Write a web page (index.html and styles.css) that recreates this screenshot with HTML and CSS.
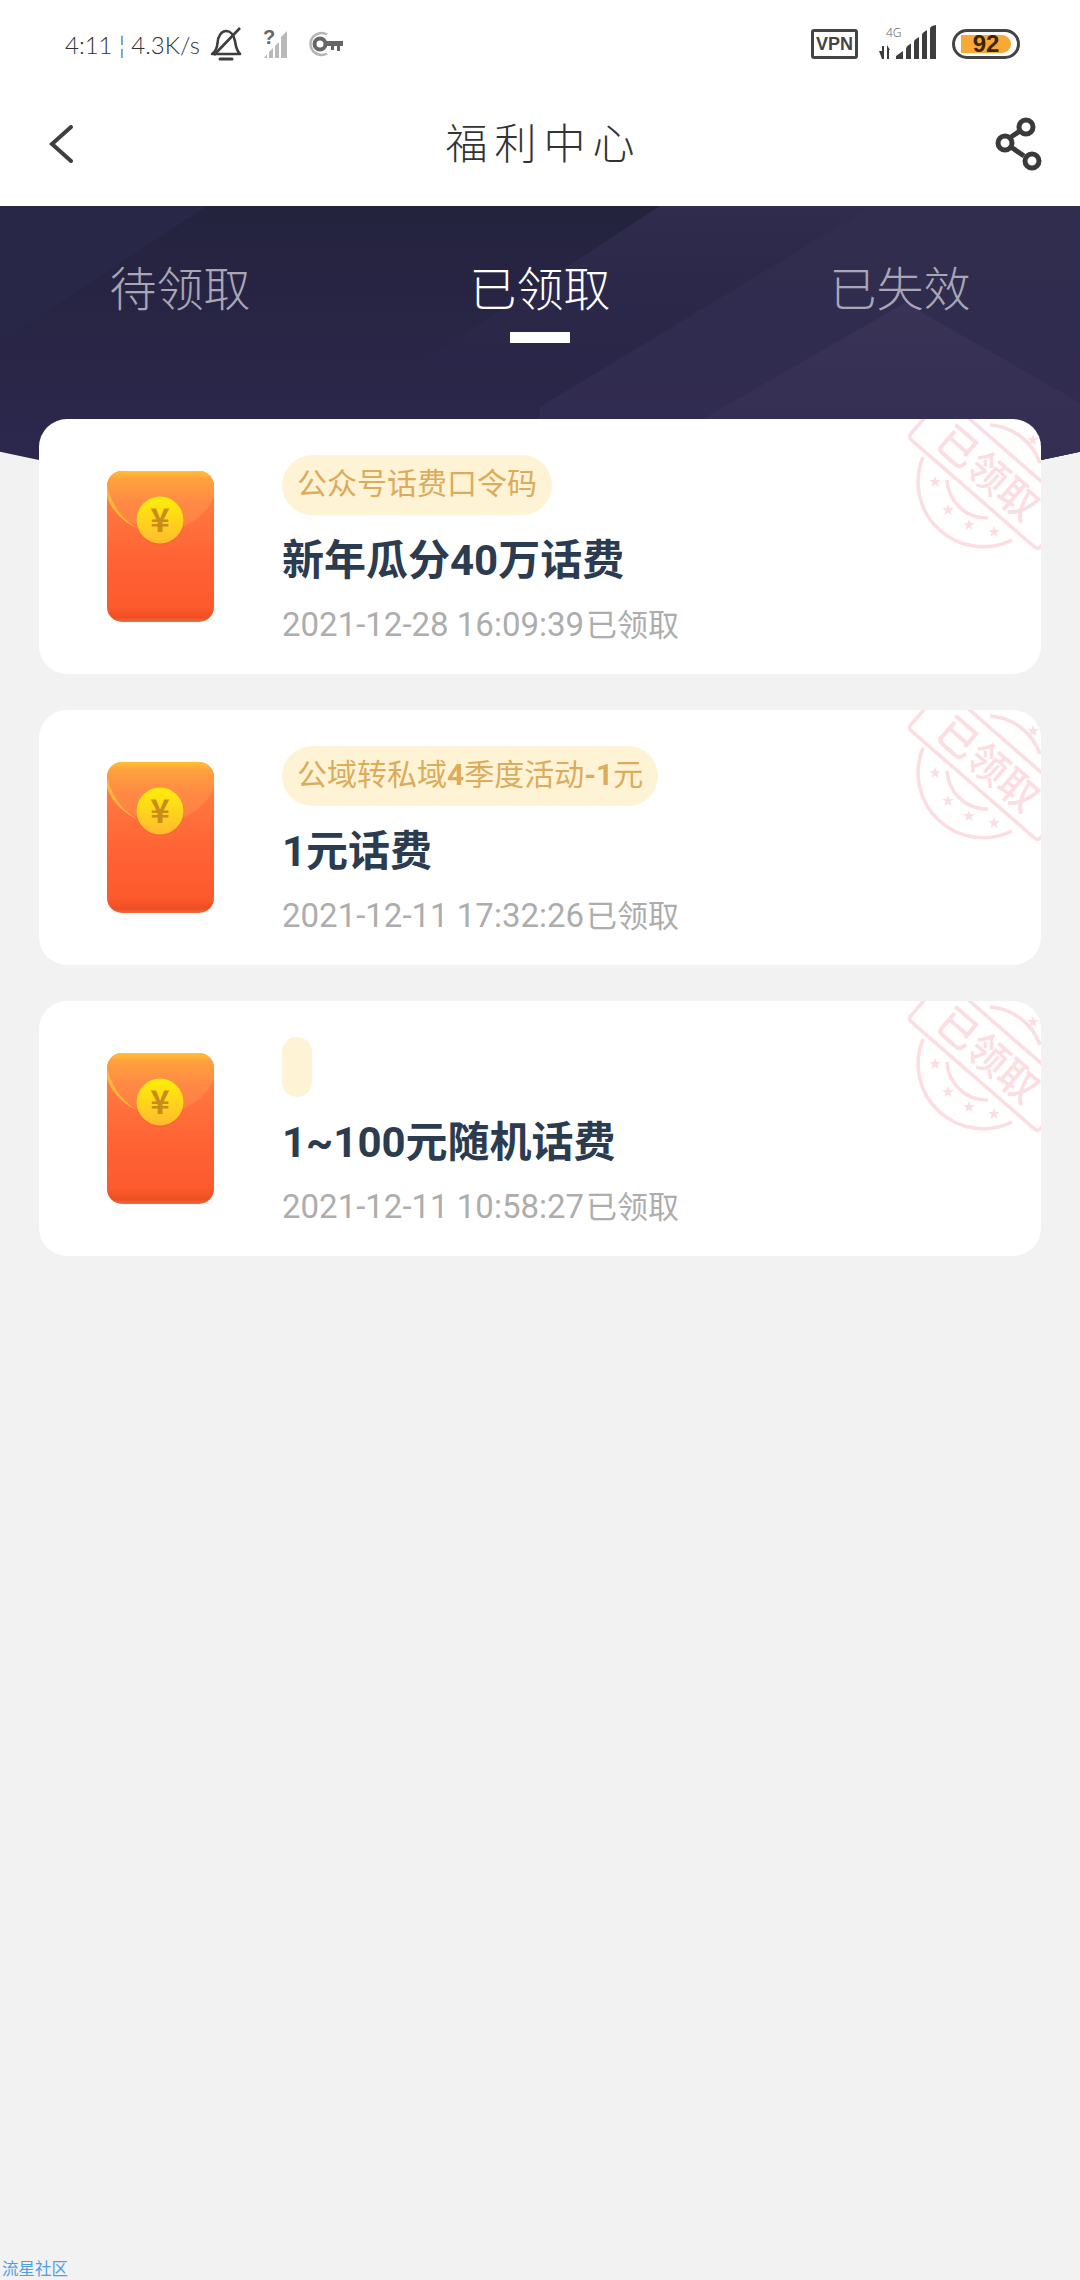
FILE: index.html
```html
<!DOCTYPE html>
<html lang="zh-CN">
<head>
    <meta charset="UTF-8">
    <meta name="viewport" content="width=device-width, initial-scale=1.0">
    <title>福利中心</title>
    <link rel="stylesheet" href="styles.css">
</head>
<body>

<!-- shared drawings for the cards -->
<svg class="defs" aria-hidden="true">
    <defs>
        <linearGradient id="envBody" x1="0" y1="0" x2="0" y2="1">
            <stop offset="0" stop-color="#ff8546"/>
            <stop offset="0.6" stop-color="#ff6234"/>
            <stop offset="0.9" stop-color="#fd5a2e"/>
            <stop offset="0.97" stop-color="#ee4f22"/>
            <stop offset="1" stop-color="#f26a3f"/>
        </linearGradient>
        <linearGradient id="envFlap" x1="0" y1="0" x2="0" y2="1">
            <stop offset="0" stop-color="#ffc232"/>
            <stop offset="0.12" stop-color="#ffa23e"/>
            <stop offset="0.5" stop-color="#ff8a44"/>
            <stop offset="1" stop-color="#ff7e45"/>
        </linearGradient>
        <linearGradient id="envCoin" x1="0" y1="0" x2="0" y2="1">
            <stop offset="0" stop-color="#ffee0a"/>
            <stop offset="1" stop-color="#ffbb2e"/>
        </linearGradient>
        <polygon id="star" points="0,-6 1.5,-1.9 5.8,-1.9 2.300,.8 3.600,5 0,2.400 -3.600,5 -2.300,.8 -5.800,-1.900 -1.500,-1.900"/>
        <symbol id="envelope" viewBox="0 0 107 151">
            <rect width="107" height="151" rx="15" fill="url(#envBody)"/>
            <path d="M0 15a15 15 0 0 1 15-15h77a15 15 0 0 1 15 15v11c-10 22-30 32-53 36c-23-4-44-14-54-36z" fill="url(#envFlap)"/>
            <path d="M0 15v11c6 16 18 26 32 32c-14-8-26-20-32-43z" fill="#ffb638"/>
            <circle cx="53" cy="50" r="24" fill="#f0642e" opacity="0.35"/>
            <circle cx="53" cy="49" r="23.500" fill="url(#envCoin)"/>
            <text class="env-yen" x="53" y="61">¥</text>
        </symbol>
        <symbol id="stamp" viewBox="0 0 136 145">
            <g class="stamp-lines">
                <path d="M18 38A65 65 0 0 0 107 121"/>
                <path d="M85 6A57 57 0 0 1 135 44"/>
                <path d="M42 61A40 40 0 0 0 83 99"/>
                <rect x="0" y="-54" width="172" height="54" rx="4" transform="translate(3 18) rotate(41)"/>
            </g>
            <g class="stamp-stars">
                <use href="#star" x="30" y="63"/>
                <use href="#star" x="43" y="91"/>
                <use href="#star" x="64" y="106"/>
                <use href="#star" x="89" y="113"/>
                <use href="#star" x="128" y="21"/>
            </g>
            <text class="stamp-text" transform="translate(3 18) rotate(41)" x="24" y="-11">已领取</text>
        </symbol>
    </defs>
</svg>

<div class="page">
    <div class="status-bar">
        <span class="status-text">4:11 ¦ 4.3K/s</span>
        <svg class="ic-bell" viewBox="0 0 32 34" fill="none" stroke="#3d3d3d" stroke-width="2.600">
            <path d="M2 27c3-2 5-5 5.500-11c.5-7 4-12 8.500-12s8 4 9 10c.8 6 2 10 5 13z" stroke-linejoin="round"/>
            <path d="M30 1L4 28"/>
            <path d="M10 32h12" stroke-width="3" stroke-linecap="round"/>
        </svg>
        <svg class="ic-nosim" viewBox="0 -6 28 36">
            <text class="nosim-mark" x="0" y="15">?</text>
            <path d="M1 29h3v-4zM6 29h4v-10l-4 4zM12 29h4v-16l-4 4zM18 29h6v-27l-6 6z" fill="#b9b9b9"/>
        </svg>
        <svg class="ic-key" viewBox="0 0 36 26">
            <path d="M20 3.500a11 11 0 1 0 0 19" fill="none" stroke="#b5b5b5" stroke-width="2.500"/>
            <circle cx="13" cy="13" r="5.500" fill="none" stroke="#666" stroke-width="4"/>
            <path d="M19 10h17v5h-3v5h-3v-5h-3v4h-3v-4h-5z" fill="#666"/>
        </svg>
        <div class="status-right">
            <span class="vpn">VPN</span>
            <svg class="ic-signal" viewBox="0 0 58 34">
                <text class="signal-tag" x="7" y="12">4G</text>
                <path d="M0 26l3 0v-5h2v13h-2zM8 34v-14l3 5h-1v9z" fill="#3d3d3d"/>
                <path d="M17 34v-3l7-5v8zM27 34v-10q0-2 2-3.500l3-2v15.500zM35 34v-17q0-2 2-3l3-2v22zM43 34v-24q0-2 2-3l3-2v29zM51 34v-30q0-2 2-3l4-1v34z" fill="#3d3d3d"/>
            </svg>
            <span class="battery"><span class="battery-fill">92</span></span>
        </div>
    </div>

    <div class="nav">
        <svg class="ic-back" viewBox="0 0 24 38" fill="none" stroke="#3f3f3f" stroke-width="4" stroke-linecap="round">
            <path d="M22 2L3 19l19 17"/>
        </svg>
        <span class="nav-title">福利中心</span>
        <svg class="ic-share" viewBox="0 0 52 58" fill="none" stroke="#3a3a3a" stroke-width="5">
            <path d="M19 22L28 16M19 32L32 41"/>
            <circle cx="34" cy="12" r="7"/>
            <circle cx="13" cy="28" r="7"/>
            <circle cx="40" cy="46" r="7"/>
        </svg>
    </div>

    <div class="banner">
        <svg class="banner-art" viewBox="0 0 1080 304" preserveAspectRatio="none">
            <defs>
                <linearGradient id="bandFade" x1="0" y1="0" x2="0" y2="1">
                    <stop offset="0" stop-color="#302c4d"/>
                    <stop offset="0.6" stop-color="#2e2a4f" stop-opacity="0"/>
                </linearGradient>
                <linearGradient id="sideFade" x1="0" y1="0" x2="0" y2="1">
                    <stop offset="0" stop-color="#312d4e"/>
                    <stop offset="1" stop-color="#302b51"/>
                </linearGradient>
                <linearGradient id="peakFade" x1="0" y1="0" x2="0" y2="1">
                    <stop offset="0" stop-color="#393456"/>
                    <stop offset="1" stop-color="#312c51"/>
                </linearGradient>
            </defs>
            <polygon points="0,0 207,0 0,137" fill="#292747"/>
            <polygon points="660,0 1080,0 1080,304 400,170" fill="url(#bandFade)"/>
            <polygon points="872,0 1080,0 1080,304 530,304 540,201" fill="url(#sideFade)"/>
            <polygon points="905,97 1080,197 1080,304 545,304" fill="url(#peakFade)"/>
        </svg>
        <div class="tabs">
            <div class="tab">待领取</div>
            <div class="tab active">已领取</div>
            <div class="tab">已失效</div>
        </div>
    </div>

    <div class="list">
        <div class="card">
            <svg class="envelope"><use href="#envelope"/></svg>
            <div class="card-info">
                <span class="tag">公众号话费口令码</span>
                <div class="card-title">新年瓜分40万话费</div>
                <div class="card-time">2021-12-28 16:09:39<span class="card-state">已领取</span></div>
            </div>
            <svg class="stamp"><use href="#stamp"/></svg>
        </div>
        <div class="card">
            <svg class="envelope"><use href="#envelope"/></svg>
            <div class="card-info">
                <span class="tag">公域转私域<b>4</b>季度活动<b>-1</b>元</span>
                <div class="card-title">1元话费</div>
                <div class="card-time">2021-12-11 17:32:26<span class="card-state">已领取</span></div>
            </div>
            <svg class="stamp"><use href="#stamp"/></svg>
        </div>
        <div class="card">
            <svg class="envelope"><use href="#envelope"/></svg>
            <div class="card-info">
                <span class="tag"></span>
                <div class="card-title">1~100元随机话费</div>
                <div class="card-time">2021-12-11 10:58:27<span class="card-state">已领取</span></div>
            </div>
            <svg class="stamp"><use href="#stamp"/></svg>
        </div>
    </div>

    <div class="watermark">流星社区</div>
</div>

</body>
</html>
```

FILE: styles.css
```css
/* Base */
html, body {
    margin: 0;
    padding: 0;
}

body {
    font-family: Roboto, "Noto Sans CJK SC", sans-serif;
    background-color: #f2f2f2;
}

.defs {
    position: absolute;
    width: 0;
    height: 0;
}

.page {
    height: 2280px;
    display: flex;
    flex-direction: column;
}

/* Status bar */
.status-bar {
    height: 90px;
    background-color: #fff;
    display: flex;
    align-items: center;
    padding: 0 60px 2px 65px;
    box-sizing: border-box;
    flex-shrink: 0;
}

.status-text {
    width: 145px;
    font-family: Lato, sans-serif;
    font-weight: 300;
    font-size: 24px;
    color: #333;
    white-space: nowrap;
}

.ic-bell {
    width: 32px;
    height: 34px;
    margin-right: 21px;
    flex-shrink: 0;
}

.ic-nosim {
    width: 28px;
    height: 36px;
    margin: -6px 16px 0 0;
}

.nosim-mark {
    font-family: "Liberation Sans", sans-serif;
    font-weight: 700;
    font-size: 20px;
    fill: #666;
}

.ic-key {
    width: 36px;
    height: 26px;
}

.status-right {
    margin-left: auto;
    display: flex;
    align-items: center;
}

.vpn {
    width: 47px;
    height: 30px;
    box-sizing: border-box;
    border: 3px solid #444;
    border-radius: 3px;
    margin-right: 21px;
    font-family: "Liberation Sans", sans-serif;
    font-weight: 700;
    font-size: 18px;
    line-height: 24px;
    text-align: center;
    color: #444;
}

.ic-signal {
    width: 58px;
    height: 34px;
    margin-right: 15px;
    margin-top: -5px;
}

.signal-tag {
    font-family: "Noto Sans", sans-serif;
    font-weight: 300;
    font-size: 12px;
    fill: #666;
}

.battery {
    width: 68px;
    height: 30px;
    box-sizing: border-box;
    border: 3.5px solid #444;
    border-radius: 15px;
    padding: 3px 6px;
    display: flex;
}

.battery-fill {
    flex: 1;
    background-color: #f6a935;
    border-radius: 0 9px 9px 0;
    font-family: "Liberation Sans", sans-serif;
    font-weight: 700;
    font-size: 24px;
    line-height: 17px;
    text-align: center;
    color: #3d2405;
}

/* Title bar */
.nav {
    height: 116px;
    box-sizing: border-box;
    background-color: #fff;
    display: grid;
    grid-template-columns: 1fr auto 1fr;
    align-items: center;
    padding: 0 36px 8px 49px;
    flex-shrink: 0;
}

.ic-back {
    width: 24px;
    height: 38px;
}

.nav-title {
    margin: -8px 0 0 -6px;
    font-family: "Noto Sans CJK SC", sans-serif;
    font-weight: 300;
    font-size: 42px;
    letter-spacing: 7px;
    color: #333;
}

.ic-share {
    width: 52px;
    height: 58px;
    justify-self: end;
}

/* Dark banner */
.banner {
    position: relative;
    height: 304px;
    background: linear-gradient(#24233e, #2e2850);
    clip-path: circle(2537px at 50% calc(100% - 2537px));
    flex-shrink: 0;
}

.banner-art {
    position: absolute;
    left: 0;
    top: 0;
    width: 100%;
    height: 100%;
}

.tabs {
    position: relative;
    display: grid;
    grid-template-columns: repeat(3, 1fr);
}

.tab {
    font-family: "Noto Sans CJK SC", sans-serif;
    font-weight: 300;
    font-size: 47px;
    line-height: 70px;
    margin-top: 45px;
    text-align: center;
    color: #a9a7b5;
}

.tab.active {
    color: #fff;
}

.tab.active::after {
    content: "";
    display: block;
    width: 60px;
    height: 11px;
    margin: 11px auto 0;
    background-color: #fff;
}

/* Cards */
.list {
    display: flex;
    flex-direction: column;
    gap: 36px;
    margin-top: -91px;
    padding: 0 39px;
    position: relative;
}

.card {
    position: relative;
    height: 255px;
    box-sizing: border-box;
    background-color: #fff;
    border-radius: 28px;
    overflow: hidden;
    display: flex;
    align-items: flex-start;
    padding: 36px 0 0 68px;
}

.envelope {
    width: 107px;
    height: 151px;
    margin-top: 16px;
    margin-right: 68px;
    flex-shrink: 0;
}

.env-yen {
    font-family: "Noto Sans CJK SC", sans-serif;
    font-weight: 700;
    font-size: 33px;
    text-anchor: middle;
    fill: #c98c18;
}

.card-info {
    display: flex;
    flex-direction: column;
    align-items: flex-start;
}

.tag {
    height: 60px;
    min-width: 30px;
    box-sizing: border-box;
    padding: 0 15px;
    background-color: #fef4d5;
    border-radius: 30px;
    font-size: 30px;
    line-height: 58px;
    color: #dcab5c;
    white-space: nowrap;
}

.card-title {
    margin-top: 16px;
    font-size: 42px;
    font-weight: 700;
    line-height: 60px;
    color: #2b3c50;
}

.card-time {
    margin-top: 12px;
    font-size: 33px;
    line-height: 44px;
    color: #adadad;
    white-space: nowrap;
}

.card-state {
    font-size: 31px;
    margin-left: 2px;
}

/* Received stamp in the card corner */
.stamp {
    position: absolute;
    top: 0;
    right: 0;
    width: 136px;
    height: 145px;
}

.stamp-lines {
    fill: none;
    stroke: #fbdde2;
    stroke-width: 3.500;
}

.stamp-stars {
    fill: #fbdde2;
}

.stamp-text {
    font-family: "Noto Sans CJK SC", sans-serif;
    font-weight: 500;
    font-size: 40px;
    fill: #fbdde2;
}

/* Watermark */
.watermark {
    margin-top: auto;
    padding-left: 2px;
    font-family: "Noto Sans CJK SC", sans-serif;
    font-size: 16.500px;
    line-height: 24px;
    color: #4f9fe6;
}
```
